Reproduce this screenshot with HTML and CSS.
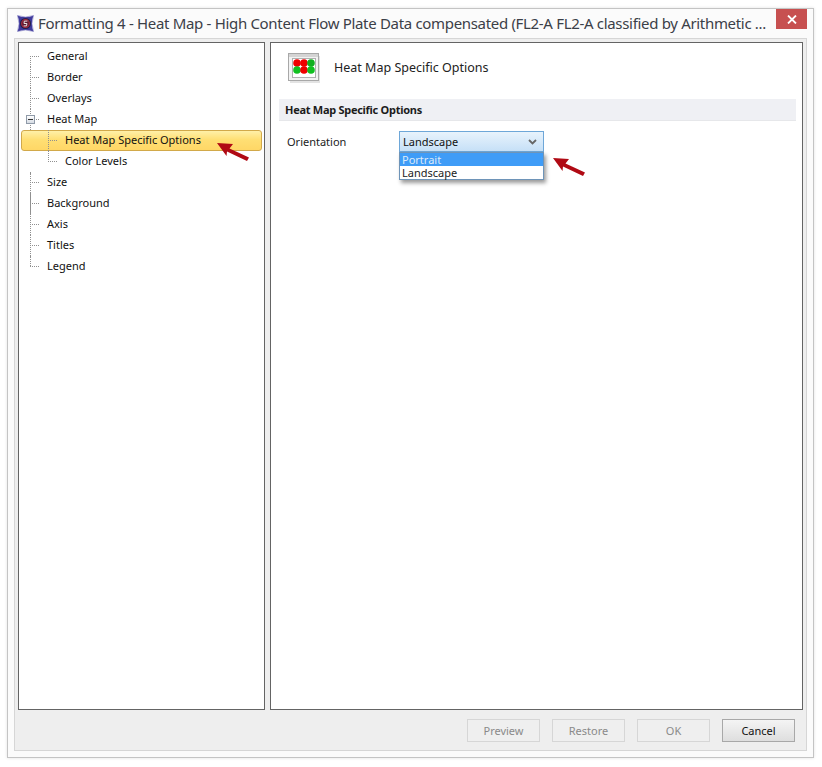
FILE: index.html
```html
<!DOCTYPE html>
<html lang="en">
<head>
<meta charset="utf-8">
<title>Formatting 4 - Heat Map</title>
<link rel="stylesheet" href="styles.css">
</head>
<body>
<div class="window">
  <header class="titlebar">
    <svg class="app-icon" width="17" height="17" viewBox="0 0 17 17">
      <path d="M0.5 0.5 Q8.5 3.5 16.5 0.5 Q13.5 8.5 16.5 16.5 Q8.5 13.5 0.5 16.5 Q3.5 8.5 0.5 0.5Z" fill="#3f3a9c" stroke="#8b88c8" stroke-width="0.6"/>
      <circle cx="8.5" cy="8.5" r="5" fill="#a82a3c" stroke="#20204a" stroke-width="1.1"/>
      <circle cx="8.5" cy="8.5" r="3.2" fill="#5b1830"/>
      <path d="M10.4 6.1H7.3L7 8.5H9.9L9.6 10.9H6.6" fill="none" stroke="#f2e6e6" stroke-width="1"/>
    </svg>
    <span class="title">Formatting 4 - Heat Map - High Content Flow Plate Data compensated (FL2-A FL2-A classified by Arithmetic ...</span>
    <button class="close" aria-label="Close">
      <svg width="10" height="9" viewBox="0 0 10 9"><path d="M1 0.5L9 8.5M9 0.5L1 8.5" stroke="#fff" stroke-width="1.8"/></svg>
    </button>
  </header>
  <div class="client">
    <div class="panes">
      <nav class="tree">
        <div class="row first"><span>General</span></div>
        <div class="row"><span>Border</span></div>
        <div class="row"><span>Overlays</span></div>
        <div class="row parent"><i class="expander"></i><span>Heat Map</span></div>
        <div class="row child selected"><span>Heat Map Specific Options</span></div>
        <div class="row child last"><span>Color Levels</span></div>
        <div class="row"><span>Size</span></div>
        <div class="row"><span>Background</span></div>
        <div class="row"><span>Axis</span></div>
        <div class="row"><span>Titles</span></div>
        <div class="row end"><span>Legend</span></div>
      </nav>
      <main class="content">
        <div class="page-head">
          <svg class="page-icon" width="32" height="30" viewBox="0 0 32 30">
            <rect x="2" y="3" width="30" height="27" fill="#d0d0d0" opacity=".6"/>
            <rect x="0.5" y="0.5" width="30" height="27" fill="#f2f2f2" stroke="#a8a8a8"/>
            <rect x="1" y="1" width="29" height="3" fill="#d4d4d4"/>
            <rect x="4.5" y="5.5" width="23" height="19" fill="#fff" stroke="#666" stroke-dasharray="1 1"/>
            <circle cx="9" cy="10" r="3.8" fill="#f00000"/><circle cx="16" cy="10" r="3.8" fill="#f00000"/><circle cx="23" cy="10" r="3.8" fill="#10b020"/>
            <circle cx="9" cy="17" r="3.8" fill="#10c020"/><circle cx="16" cy="17" r="3.8" fill="#f00000"/><circle cx="23" cy="17" r="3.8" fill="#10c020"/>
          </svg>
          <h1>Heat Map Specific Options</h1>
        </div>
        <h2 class="section">Heat Map Specific Options</h2>
        <div class="field">
          <label>Orientation</label>
          <div class="combo">
            <div class="combo-box">
              <span>Landscape</span>
              <svg width="9" height="6" viewBox="0 0 9 6"><path d="M1 1L4.5 4.5L8 1" fill="none" stroke="#666" stroke-width="1.8"/></svg>
            </div>
            <ul class="combo-list">
              <li class="active">Portrait</li>
              <li>Landscape</li>
            </ul>
          </div>
        </div>
      </main>
    </div>
    <footer class="actions">
      <button disabled>Preview</button>
      <button disabled>Restore</button>
      <button disabled>OK</button>
      <button class="primary">Cancel</button>
    </footer>
  </div>
</div>
<svg class="arrow arrow-tree" width="36" height="24" viewBox="0 0 36 24"><path d="M1 3L17 4L13.5 8.5L33 17.5L31 21L11 11.5L10.5 16Z" fill="#b00a14"/></svg>
<svg class="arrow arrow-combo" width="36" height="24" viewBox="0 0 36 24"><path d="M1 3L17 4L13.5 8.5L33 17.5L31 21L11 11.5L10.5 16Z" fill="#b00a14"/></svg>
</body>
</html>
```
FILE: styles.css
```css
* { box-sizing: border-box; }
html, body { margin: 0; padding: 0; background: #fff; }
body {
  position: relative;
  width: 822px;
  height: 767px;
  overflow: hidden;
  padding: 8px 8px 9px 7px;
  font-family: "Noto Sans", "Open Sans", "Liberation Sans", sans-serif;
  font-size: 11px;
  color: #111;
}
.window {
  height: 750px;
  border: 1px solid #c4c4c4;
  background: #fbfbfb;
  box-shadow: 0 0 3px rgba(0,0,0,.12);
  padding: 0 6px 6px 6px;
  display: flex;
  flex-direction: column;
}
.titlebar {
  height: 29px;
  display: flex;
  align-items: center;
  position: relative;
  color: #3b4048;
}
.app-icon { margin: -1px 0 0 3px; flex: none; }
.title {
  margin-left: 4px;
  font-size: 15px;
  letter-spacing: -0.32px;
  white-space: nowrap;
  position: relative;
  top: -1px;
}
.close {
  position: absolute;
  top: 0;
  right: 0;
  width: 31px;
  height: 20px;
  border: 0;
  padding: 0;
  background: #c75050;
  display: flex;
  align-items: center;
  justify-content: center;
}
.client {
  flex: 1;
  border: 1px solid #d6d6d6;
  background: #eeeeee;
  padding: 3px 3px 0 3px;
  display: flex;
  flex-direction: column;
}
.panes {
  height: 668px;
  display: flex;
  gap: 5px;
}
.tree {
  width: 247px;
  border: 1px solid #646464;
  background: #fff;
  padding: 3px 2px;
  position: relative;
}
.row {
  height: 21px;
  line-height: 20px;
  padding-left: 26px;
  position: relative;
  white-space: nowrap;
}
.row::before {
  content: "";
  position: absolute;
  left: 9px;
  top: 10px;
  width: 9px;
  border-top: 1px dotted #909090;
}
.row::after {
  content: "";
  position: absolute;
  left: 9px;
  top: 0;
  height: 21px;
  border-left: 1px dotted #909090;
}
.row.first::after { top: 10px; height: 11px; }
.row.end::after { height: 10px; }
.row.child { padding-left: 44px; }
.row.child::before { left: 27px; }
.row.child::after { height: 21px; left: 27px; }
.row.child.last::after { height: 11px; }
.child > span { position: relative; z-index: 1; }
.selected {
  border: 1px solid #d2a94a;
  border-radius: 3px;
  background: linear-gradient(#fff0a8 0%, #ffdf74 45%, #ffd766 100%);
  line-height: 18px;
  padding-left: 43px !important;
}
.selected::before { left: 26px !important; top: 9px !important; }
.selected::after { left: 26px !important; top: -1px !important; }
.tree::before {
  content: "";
  position: absolute;
  left: 11px;
  top: 130px;
  height: 42px;
  border-left: 1px dotted #909090;
  z-index: 1;
}
.expander {
  position: absolute;
  left: 5px;
  top: 6px;
  width: 9px;
  height: 9px;
  border: 1px solid #8f9aa8;
  background: linear-gradient(#fff, #d5dbe3);
  z-index: 2;
}
.expander::after {
  content: "";
  position: absolute;
  left: 1px;
  top: 3px;
  width: 5px;
  height: 1px;
  background: #333;
}
.content {
  flex: 1;
  border: 1px solid #646464;
  background: #fff;
  padding: 0 6px 0 8px;
}
.page-head {
  height: 56px;
  display: flex;
  align-items: center;
  padding-left: 9px;
}
.page-icon { flex: none; margin-top: -7px; }
.page-head h1 {
  margin: 0 0 0 14px;
  font-size: 12.5px;
  font-weight: 400;
  color: #222;
  position: relative;
  top: -4px;
}
.section {
  margin: 0;
  height: 22px;
  line-height: 21px;
  padding-left: 6px;
  font-size: 11px;
  font-weight: 700;
  letter-spacing: -0.28px;
  background: #eff0f4;
  border-bottom: 1px solid #e6e7ea;
  color: #1c1c1c;
}
.field {
  display: flex;
  margin-top: 10px;
  padding-left: 8px;
  position: relative;
}
.field label {
  width: 112px;
  line-height: 21px;
  color: #222;
}
.combo { width: 145px; position: relative; }
.combo-box {
  height: 21px;
  border: 1px solid #6ea7d8;
  background: linear-gradient(#e8f3fc, #c6e0f7);
  display: flex;
  align-items: center;
  justify-content: space-between;
  padding: 0 6px 0 3px;
  color: #111;
}
.combo-list {
  position: absolute;
  left: 0;
  right: 0;
  top: 21px;
  margin: 0;
  padding: 0;
  list-style: none;
  background: #fff;
  border: 1px solid #6e94b8;
  box-shadow: 2px 3px 4px rgba(0,0,0,.4);
}
.combo-list li {
  height: 13px;
  line-height: 13px;
  padding-left: 2px;
  color: #222;
}
.combo-list li.active {
  line-height: 14px;
  background: #3f9cf7;
  color: #dceafa;
}
.actions {
  flex: 1;
  display: flex;
  justify-content: flex-end;
  align-items: flex-start;
  gap: 12px;
  padding: 9px 8px 0 0;
}
.actions button {
  width: 73px;
  height: 23px;
  padding: 0;
  font: inherit;
  border: 1px solid #d6d6d6;
  background: #efefef;
  color: #8a8a8a;
}
.actions .primary {
  border-color: #a8a8a8;
  background: linear-gradient(#f4f4f4, #dedede);
  color: #111;
}
.arrow { position: absolute; }
.arrow-tree { left: 216px; top: 140px; }
.arrow-combo { left: 552px; top: 155px; }
```
